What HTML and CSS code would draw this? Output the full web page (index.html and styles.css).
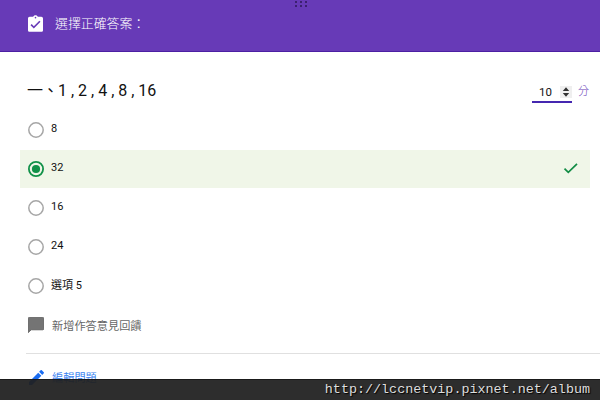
FILE: index.html
```html
<!DOCTYPE html>
<html lang="zh-Hant">
<head>
<meta charset="utf-8">
<title>選擇正確答案</title>
<link rel="stylesheet" href="styles.css">
</head>
<body>
<header class="header">
  <div class="grip"><i></i><i></i><i></i><i></i><i></i><i></i></div>
  <svg class="header-icon" viewBox="3 1 18 20"><path fill="#fff" d="M19 3h-4.180C14.400 1.840 13.300 1 12 1s-2.400.84-2.820 2H5c-1.100 0-2 .9-2 2v14c0 1.100.9 2 2 2h14c1.100 0 2-.9 2-2V5c0-1.100-.9-2-2-2zm-7 0c.55 0 1 .45 1 1s-.45 1-1 1-1-.45-1-1 .45-1 1-1zm-2 14l-4-4 1.410-1.410L10 14.170l6.590-6.590L18 9l-8 8z"/></svg>
  <span class="header-title">選擇正確答案：</span>
</header>
<main>
  <section class="question">
    <h1 class="question-title"><span class="ordinal">一、</span>1 , 2 , 4 , 8 , 16</h1>
    <div class="points">
      <div class="points-field">
        <span class="points-value">10</span>
        <svg class="spinner" viewBox="0 0 12 12"><path fill="#333" d="M6 1.300 9.200 5H2.800zM6 10.700 9.200 7H2.800z"/></svg>
      </div>
      <span class="points-unit">分</span>
    </div>
  </section>
  <ul class="options">
    <li class="option"><svg class="radio" viewBox="0 0 16 16"><circle class="ring" cx="8" cy="8" r="7.200"/></svg><span class="label">8</span></li>
    <li class="option correct"><svg class="radio" viewBox="0 0 16 16"><circle class="ring" cx="8" cy="8" r="7.100"/><circle class="dot" cx="8" cy="8" r="4.100"/></svg><span class="label">32</span>
      <svg class="check" viewBox="0 0 16 12"><path fill="none" stroke="#128c45" stroke-width="1.700" d="M1.500 5.600 5.300 9.400 14 .9"/></svg></li>
    <li class="option"><svg class="radio" viewBox="0 0 16 16"><circle class="ring" cx="8" cy="8" r="7.200"/></svg><span class="label">16</span></li>
    <li class="option"><svg class="radio" viewBox="0 0 16 16"><circle class="ring" cx="8" cy="8" r="7.200"/></svg><span class="label">24</span></li>
    <li class="option last"><svg class="radio" viewBox="0 0 16 16"><circle class="ring" cx="8" cy="8" r="7.200"/></svg><span class="label">選項 5</span></li>
  </ul>
  <div class="feedback">
    <svg class="feedback-icon" viewBox="2 2 20 20"><path fill="#747474" stroke="#555" stroke-width="1" d="M20.500 2.500h-17c-.7 0-1.200.5-1.200 1.200v17.800L6 18h14.500c.7 0 1.200-.5 1.200-1.200V3.700c0-.7-.5-1.200-1.200-1.200z"/></svg>
    <span>新增作答意見回饋</span>
  </div>
  <div class="edit">
    <svg class="edit-icon" viewBox="3 3 18 18"><path fill="#1a6cf0" d="M3 17.250V21h3.750L17.810 9.940l-3.750-3.750L3 17.250zM20.710 7.040a1 1 0 0 0 0-1.410l-2.340-2.340a1 1 0 0 0-1.410 0l-1.830 1.830 3.750 3.750 1.830-1.830z"/></svg>
    <span>編輯問題</span>
  </div>
</main>
<footer class="watermark">http://lccnetvip.pixnet.net/album</footer>
</body>
</html>
```
FILE: styles.css
```css
* { box-sizing: border-box; }
body {
  margin: 0;
  width: 600px;
  height: 400px;
  overflow: hidden;
  position: relative;
  background: #fff;
  color: #111;
  font-family: Roboto, "Noto Sans CJK TC", sans-serif;
}
svg { display: block; flex: none; }
.header {
  position: relative;
  display: flex;
  align-items: center;
  gap: 12px;
  height: 52px;
  padding: 0 28px 5px;
  background: #673ab7;
  border-bottom: 1px solid #4c1fa3;
  color: #fff;
}
.grip {
  position: absolute;
  left: 295px;
  top: 1px;
  display: grid;
  grid-template-columns: repeat(3, 2px);
  gap: 2px 3px;
}
.grip i { width: 2px; height: 2px; background: #3b2070; }
.header-icon { width: 15px; height: 17px; }
.header-title {
  padding-top: 2px;
  font-size: 12.900px;
  font-weight: 300;
  line-height: 18px;
  white-space: nowrap;
}
.question {
  display: flex;
  justify-content: space-between;
  height: 59px;
  padding: 28px 11px 0 27px;
}
.question-title {
  margin: 0;
  font-size: 16px;
  font-weight: 400;
  line-height: 22px;
  white-space: nowrap;
}
.ordinal { letter-spacing: -0.5px; }
.points { display: flex; gap: 6px; }
.points-field {
  display: flex;
  align-items: center;
  justify-content: flex-end;
  gap: 8px;
  width: 40px;
  height: 23px;
  padding-top: 3px;
  border-bottom: 2px solid #4527b0;
}
.points-value { font-size: 11.500px; line-height: 14px; }
.spinner { width: 12px; height: 12px; background: #efefef; }
.points-unit {
  color: #673ab7;
  font-size: 11px;
  font-weight: 300;
  line-height: 23px;
}
.options {
  display: grid;
  gap: 1px;
  margin: 0;
  padding: 0 10px 0 20px;
  list-style: none;
}
.option {
  display: flex;
  align-items: center;
  gap: 7px;
  height: 38px;
  padding: 0 11px 0 8px;
}
.correct { background: #f0f6e8; }
.radio { width: 16px; height: 16px; }
.ring { fill: none; stroke: #a6a6a6; stroke-width: 1.500; }
.correct .ring { stroke: #109148; stroke-width: 1.800; }
.dot { fill: #109148; }
.label {
  flex: 1;
  padding-bottom: 3px;
  font-size: 11px;
  line-height: 14px;
}
.last .label { padding-bottom: 1px; }
.check { width: 16px; height: 12px; }
.feedback {
  display: flex;
  align-items: center;
  gap: 8px;
  height: 49px;
  margin-left: 26px;
  padding: 0 0 8px 2px;
  border-bottom: 1px solid #e0e0e0;
  color: #666;
  font-size: 11.200px;
}
.feedback-icon { width: 16px; height: 16px; }
.edit {
  display: flex;
  align-items: center;
  gap: 8px;
  height: 48px;
  padding: 0 0 1px 29px;
  color: #3a82f0;
  font-size: 11.200px;
}
.edit span { padding-bottom: 1px; }
.edit-icon { width: 15px; height: 15px; }
.watermark {
  position: absolute;
  left: 0;
  right: 0;
  bottom: 0;
  height: 21px;
  padding-right: 10px;
  border-top: 1px solid rgba(24, 24, 24, .9);
  background: rgba(32, 32, 32, .94);
  color: #ddd;
  font: 13.400px/20px "Liberation Mono", monospace;
  text-align: right;
  text-shadow: 1px 1px 1px #000;
}
```
